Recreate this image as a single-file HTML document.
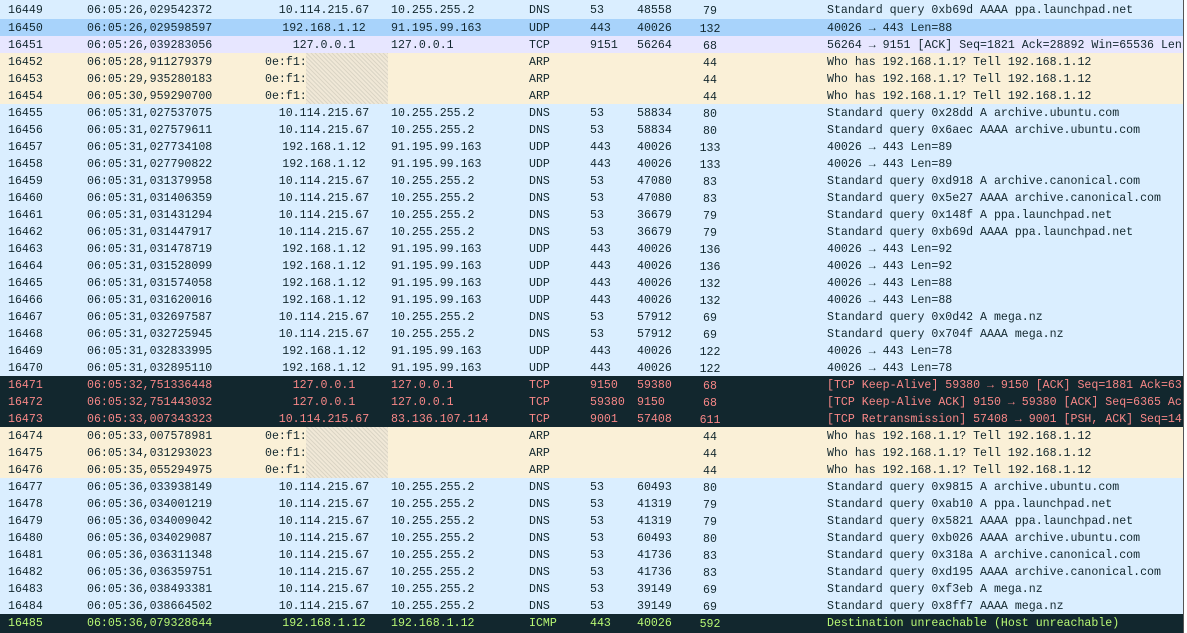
<!DOCTYPE html><html><head><meta charset="utf-8"><style>
body{margin:0;width:1187px;height:633px;overflow:hidden;background:#daeeff;font-family:"Liberation Mono",monospace;font-size:11.6px;position:relative}
.r{position:absolute;left:0;width:1184px;height:17px;line-height:17px;color:#12272e;white-space:nowrap;overflow:hidden}
.r span{position:absolute;top:1px}
.n{left:8px}.t{left:87px}.s{left:264px;width:120px;text-align:center}.sm{left:265px}.d{left:391px}.p{left:529px}.sp{left:590px}.dp{left:637px}.r span.l{left:688px;width:44px;text-align:center;top:2px}.i{left:827px}
.u{background:#daeeff}.sel{background:#a8d3fb}.tc{background:#e7e6ff}.a{background:#faf0d7}
.b{background:#12272e;color:#f78787}.g{background:#12272e;color:#b7f774}
.nz{position:absolute;left:306px;top:0;width:82px;height:17px;background:repeating-linear-gradient(45deg,#d8d3c4 0 1px,#efe8d8 1px 3px),#e4ddcc;opacity:.9}
#sb{position:absolute;right:0;top:0;width:3px;height:633px;background:#fff;border-left:1px solid #555}
</style></head><body>
<div class="r u" style="top:0;height:19px;line-height:19px"><span class="n">16449</span><span class="t">06:05:26,029542372</span><span class="s">10.114.215.67</span><span class="d">10.255.255.2</span><span class="p">DNS</span><span class="sp">53</span><span class="dp">48558</span><span class="l">79</span><span class="i">Standard query 0xb69d AAAA ppa.launchpad.net</span></div>
<div class="r sel" style="top:19px"><span class="n">16450</span><span class="t">06:05:26,029598597</span><span class="s">192.168.1.12</span><span class="d">91.195.99.163</span><span class="p">UDP</span><span class="sp">443</span><span class="dp">40026</span><span class="l">132</span><span class="i">40026 → 443 Len=88</span></div>
<div class="r tc" style="top:36px"><span class="n">16451</span><span class="t">06:05:26,039283056</span><span class="s">127.0.0.1</span><span class="d">127.0.0.1</span><span class="p">TCP</span><span class="sp">9151</span><span class="dp">56264</span><span class="l">68</span><span class="i">56264 → 9151 [ACK] Seq=1821 Ack=28892 Win=65536 Len</span></div>
<div class="r a" style="top:53px"><span class="n">16452</span><span class="t">06:05:28,911279379</span><span class="sm">0e:f1:</span><div class="nz"></div><span class="p">ARP</span><span class="l">44</span><span class="i">Who has 192.168.1.1? Tell 192.168.1.12</span></div>
<div class="r a" style="top:70px"><span class="n">16453</span><span class="t">06:05:29,935280183</span><span class="sm">0e:f1:</span><div class="nz"></div><span class="p">ARP</span><span class="l">44</span><span class="i">Who has 192.168.1.1? Tell 192.168.1.12</span></div>
<div class="r a" style="top:87px"><span class="n">16454</span><span class="t">06:05:30,959290700</span><span class="sm">0e:f1:</span><div class="nz"></div><span class="p">ARP</span><span class="l">44</span><span class="i">Who has 192.168.1.1? Tell 192.168.1.12</span></div>
<div class="r u" style="top:104px"><span class="n">16455</span><span class="t">06:05:31,027537075</span><span class="s">10.114.215.67</span><span class="d">10.255.255.2</span><span class="p">DNS</span><span class="sp">53</span><span class="dp">58834</span><span class="l">80</span><span class="i">Standard query 0x28dd A archive.ubuntu.com</span></div>
<div class="r u" style="top:121px"><span class="n">16456</span><span class="t">06:05:31,027579611</span><span class="s">10.114.215.67</span><span class="d">10.255.255.2</span><span class="p">DNS</span><span class="sp">53</span><span class="dp">58834</span><span class="l">80</span><span class="i">Standard query 0x6aec AAAA archive.ubuntu.com</span></div>
<div class="r u" style="top:138px"><span class="n">16457</span><span class="t">06:05:31,027734108</span><span class="s">192.168.1.12</span><span class="d">91.195.99.163</span><span class="p">UDP</span><span class="sp">443</span><span class="dp">40026</span><span class="l">133</span><span class="i">40026 → 443 Len=89</span></div>
<div class="r u" style="top:155px"><span class="n">16458</span><span class="t">06:05:31,027790822</span><span class="s">192.168.1.12</span><span class="d">91.195.99.163</span><span class="p">UDP</span><span class="sp">443</span><span class="dp">40026</span><span class="l">133</span><span class="i">40026 → 443 Len=89</span></div>
<div class="r u" style="top:172px"><span class="n">16459</span><span class="t">06:05:31,031379958</span><span class="s">10.114.215.67</span><span class="d">10.255.255.2</span><span class="p">DNS</span><span class="sp">53</span><span class="dp">47080</span><span class="l">83</span><span class="i">Standard query 0xd918 A archive.canonical.com</span></div>
<div class="r u" style="top:189px"><span class="n">16460</span><span class="t">06:05:31,031406359</span><span class="s">10.114.215.67</span><span class="d">10.255.255.2</span><span class="p">DNS</span><span class="sp">53</span><span class="dp">47080</span><span class="l">83</span><span class="i">Standard query 0x5e27 AAAA archive.canonical.com</span></div>
<div class="r u" style="top:206px"><span class="n">16461</span><span class="t">06:05:31,031431294</span><span class="s">10.114.215.67</span><span class="d">10.255.255.2</span><span class="p">DNS</span><span class="sp">53</span><span class="dp">36679</span><span class="l">79</span><span class="i">Standard query 0x148f A ppa.launchpad.net</span></div>
<div class="r u" style="top:223px"><span class="n">16462</span><span class="t">06:05:31,031447917</span><span class="s">10.114.215.67</span><span class="d">10.255.255.2</span><span class="p">DNS</span><span class="sp">53</span><span class="dp">36679</span><span class="l">79</span><span class="i">Standard query 0xb69d AAAA ppa.launchpad.net</span></div>
<div class="r u" style="top:240px"><span class="n">16463</span><span class="t">06:05:31,031478719</span><span class="s">192.168.1.12</span><span class="d">91.195.99.163</span><span class="p">UDP</span><span class="sp">443</span><span class="dp">40026</span><span class="l">136</span><span class="i">40026 → 443 Len=92</span></div>
<div class="r u" style="top:257px"><span class="n">16464</span><span class="t">06:05:31,031528099</span><span class="s">192.168.1.12</span><span class="d">91.195.99.163</span><span class="p">UDP</span><span class="sp">443</span><span class="dp">40026</span><span class="l">136</span><span class="i">40026 → 443 Len=92</span></div>
<div class="r u" style="top:274px"><span class="n">16465</span><span class="t">06:05:31,031574058</span><span class="s">192.168.1.12</span><span class="d">91.195.99.163</span><span class="p">UDP</span><span class="sp">443</span><span class="dp">40026</span><span class="l">132</span><span class="i">40026 → 443 Len=88</span></div>
<div class="r u" style="top:291px"><span class="n">16466</span><span class="t">06:05:31,031620016</span><span class="s">192.168.1.12</span><span class="d">91.195.99.163</span><span class="p">UDP</span><span class="sp">443</span><span class="dp">40026</span><span class="l">132</span><span class="i">40026 → 443 Len=88</span></div>
<div class="r u" style="top:308px"><span class="n">16467</span><span class="t">06:05:31,032697587</span><span class="s">10.114.215.67</span><span class="d">10.255.255.2</span><span class="p">DNS</span><span class="sp">53</span><span class="dp">57912</span><span class="l">69</span><span class="i">Standard query 0x0d42 A mega.nz</span></div>
<div class="r u" style="top:325px"><span class="n">16468</span><span class="t">06:05:31,032725945</span><span class="s">10.114.215.67</span><span class="d">10.255.255.2</span><span class="p">DNS</span><span class="sp">53</span><span class="dp">57912</span><span class="l">69</span><span class="i">Standard query 0x704f AAAA mega.nz</span></div>
<div class="r u" style="top:342px"><span class="n">16469</span><span class="t">06:05:31,032833995</span><span class="s">192.168.1.12</span><span class="d">91.195.99.163</span><span class="p">UDP</span><span class="sp">443</span><span class="dp">40026</span><span class="l">122</span><span class="i">40026 → 443 Len=78</span></div>
<div class="r u" style="top:359px"><span class="n">16470</span><span class="t">06:05:31,032895110</span><span class="s">192.168.1.12</span><span class="d">91.195.99.163</span><span class="p">UDP</span><span class="sp">443</span><span class="dp">40026</span><span class="l">122</span><span class="i">40026 → 443 Len=78</span></div>
<div class="r b" style="top:376px"><span class="n">16471</span><span class="t">06:05:32,751336448</span><span class="s">127.0.0.1</span><span class="d">127.0.0.1</span><span class="p">TCP</span><span class="sp">9150</span><span class="dp">59380</span><span class="l">68</span><span class="i">[TCP Keep-Alive] 59380 → 9150 [ACK] Seq=1881 Ack=63</span></div>
<div class="r b" style="top:393px"><span class="n">16472</span><span class="t">06:05:32,751443032</span><span class="s">127.0.0.1</span><span class="d">127.0.0.1</span><span class="p">TCP</span><span class="sp">59380</span><span class="dp">9150</span><span class="l">68</span><span class="i">[TCP Keep-Alive ACK] 9150 → 59380 [ACK] Seq=6365 Ac</span></div>
<div class="r b" style="top:410px"><span class="n">16473</span><span class="t">06:05:33,007343323</span><span class="s">10.114.215.67</span><span class="d">83.136.107.114</span><span class="p">TCP</span><span class="sp">9001</span><span class="dp">57408</span><span class="l">611</span><span class="i">[TCP Retransmission] 57408 → 9001 [PSH, ACK] Seq=14</span></div>
<div class="r a" style="top:427px"><span class="n">16474</span><span class="t">06:05:33,007578981</span><span class="sm">0e:f1:</span><div class="nz"></div><span class="p">ARP</span><span class="l">44</span><span class="i">Who has 192.168.1.1? Tell 192.168.1.12</span></div>
<div class="r a" style="top:444px"><span class="n">16475</span><span class="t">06:05:34,031293023</span><span class="sm">0e:f1:</span><div class="nz"></div><span class="p">ARP</span><span class="l">44</span><span class="i">Who has 192.168.1.1? Tell 192.168.1.12</span></div>
<div class="r a" style="top:461px"><span class="n">16476</span><span class="t">06:05:35,055294975</span><span class="sm">0e:f1:</span><div class="nz"></div><span class="p">ARP</span><span class="l">44</span><span class="i">Who has 192.168.1.1? Tell 192.168.1.12</span></div>
<div class="r u" style="top:478px"><span class="n">16477</span><span class="t">06:05:36,033938149</span><span class="s">10.114.215.67</span><span class="d">10.255.255.2</span><span class="p">DNS</span><span class="sp">53</span><span class="dp">60493</span><span class="l">80</span><span class="i">Standard query 0x9815 A archive.ubuntu.com</span></div>
<div class="r u" style="top:495px"><span class="n">16478</span><span class="t">06:05:36,034001219</span><span class="s">10.114.215.67</span><span class="d">10.255.255.2</span><span class="p">DNS</span><span class="sp">53</span><span class="dp">41319</span><span class="l">79</span><span class="i">Standard query 0xab10 A ppa.launchpad.net</span></div>
<div class="r u" style="top:512px"><span class="n">16479</span><span class="t">06:05:36,034009042</span><span class="s">10.114.215.67</span><span class="d">10.255.255.2</span><span class="p">DNS</span><span class="sp">53</span><span class="dp">41319</span><span class="l">79</span><span class="i">Standard query 0x5821 AAAA ppa.launchpad.net</span></div>
<div class="r u" style="top:529px"><span class="n">16480</span><span class="t">06:05:36,034029087</span><span class="s">10.114.215.67</span><span class="d">10.255.255.2</span><span class="p">DNS</span><span class="sp">53</span><span class="dp">60493</span><span class="l">80</span><span class="i">Standard query 0xb026 AAAA archive.ubuntu.com</span></div>
<div class="r u" style="top:546px"><span class="n">16481</span><span class="t">06:05:36,036311348</span><span class="s">10.114.215.67</span><span class="d">10.255.255.2</span><span class="p">DNS</span><span class="sp">53</span><span class="dp">41736</span><span class="l">83</span><span class="i">Standard query 0x318a A archive.canonical.com</span></div>
<div class="r u" style="top:563px"><span class="n">16482</span><span class="t">06:05:36,036359751</span><span class="s">10.114.215.67</span><span class="d">10.255.255.2</span><span class="p">DNS</span><span class="sp">53</span><span class="dp">41736</span><span class="l">83</span><span class="i">Standard query 0xd195 AAAA archive.canonical.com</span></div>
<div class="r u" style="top:580px"><span class="n">16483</span><span class="t">06:05:36,038493381</span><span class="s">10.114.215.67</span><span class="d">10.255.255.2</span><span class="p">DNS</span><span class="sp">53</span><span class="dp">39149</span><span class="l">69</span><span class="i">Standard query 0xf3eb A mega.nz</span></div>
<div class="r u" style="top:597px"><span class="n">16484</span><span class="t">06:05:36,038664502</span><span class="s">10.114.215.67</span><span class="d">10.255.255.2</span><span class="p">DNS</span><span class="sp">53</span><span class="dp">39149</span><span class="l">69</span><span class="i">Standard query 0x8ff7 AAAA mega.nz</span></div>
<div class="r g" style="top:614px;height:19px"><span class="n">16485</span><span class="t">06:05:36,079328644</span><span class="s">192.168.1.12</span><span class="d">192.168.1.12</span><span class="p">ICMP</span><span class="sp">443</span><span class="dp">40026</span><span class="l">592</span><span class="i">Destination unreachable (Host unreachable)</span></div>
<div id="sb"></div>
</body></html>
